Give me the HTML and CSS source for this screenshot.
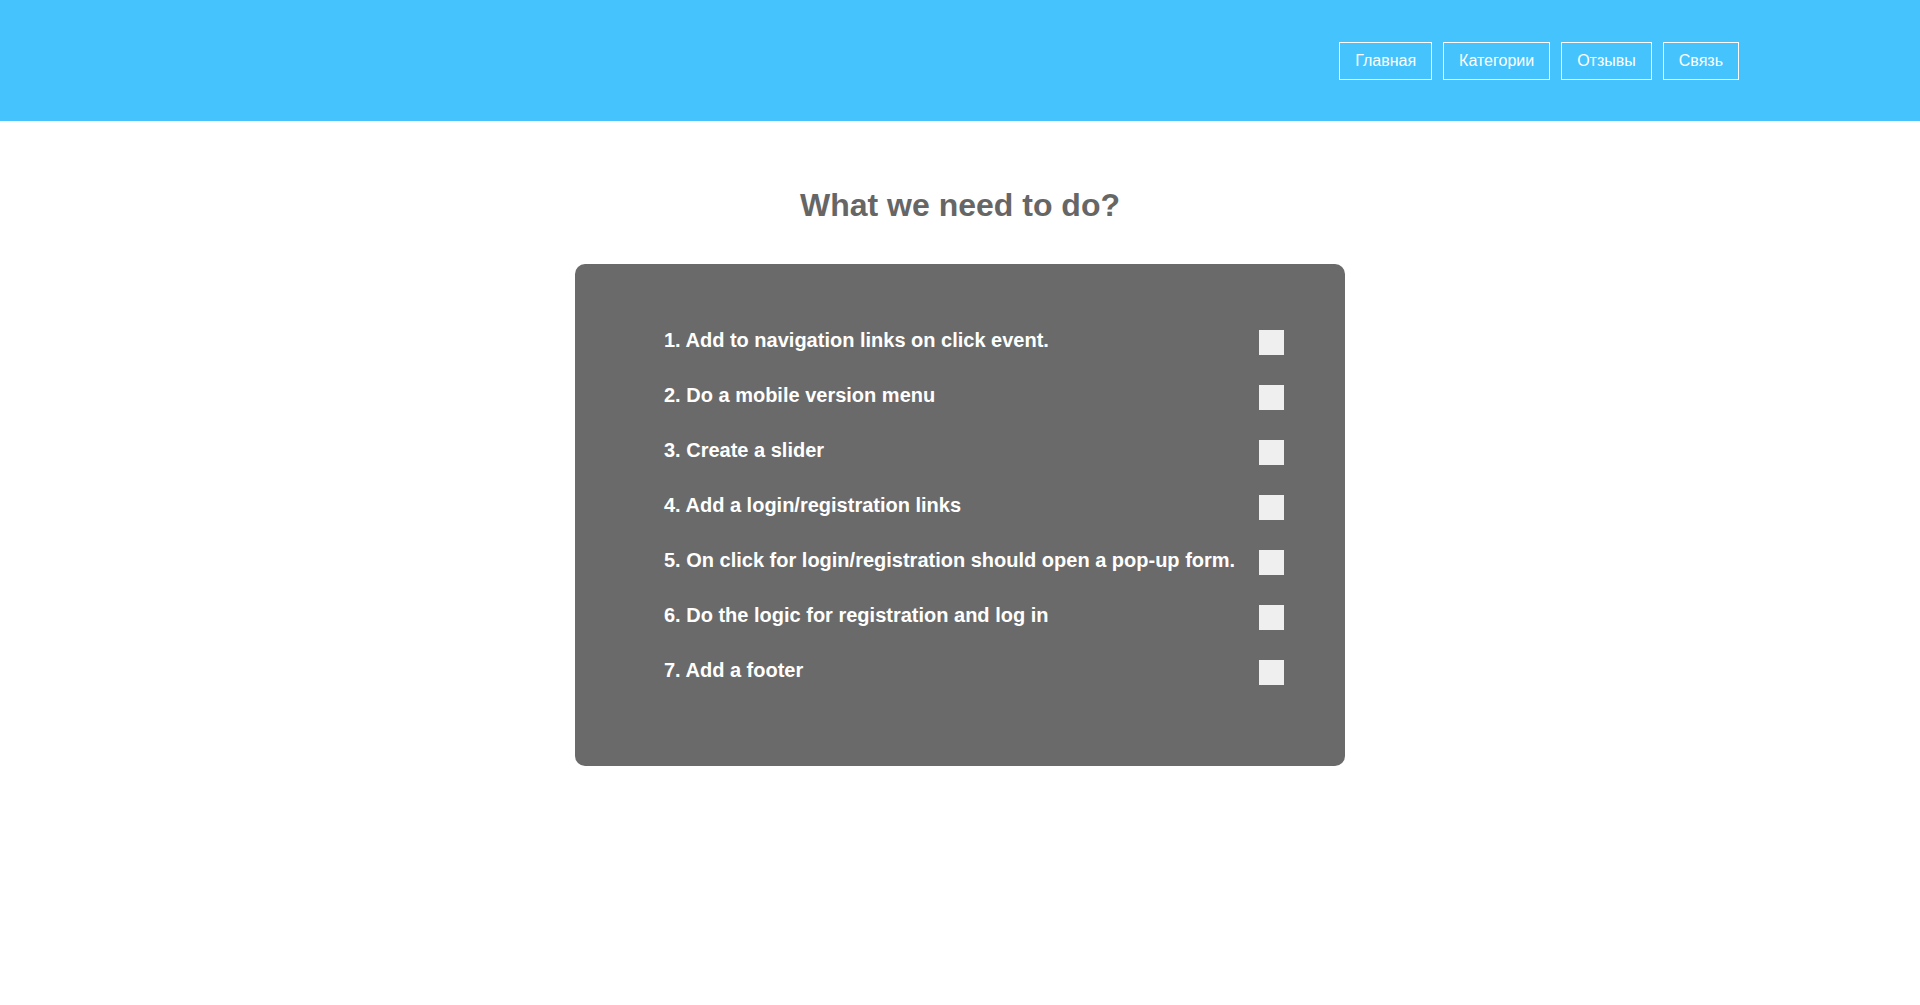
FILE: index.html
```html
<!DOCTYPE html>
<html lang="ru">
<head>
<meta charset="utf-8">
<title>Todo</title>
<link rel="stylesheet" href="styles.css">
</head>
<body>
<header class="header">
  <nav class="nav">
    <a class="nav-link" href="#">Главная</a>
    <a class="nav-link" href="#">Категории</a>
    <a class="nav-link" href="#">Отзывы</a>
    <a class="nav-link" href="#">Связь</a>
  </nav>
</header>
<main class="main">
  <h1 class="title">What we need to do?</h1>
  <section class="card">
    <ul class="todo-list">
      <li class="todo"><span class="todo-text">1. Add to navigation links on click event.</span><span class="check"></span></li>
      <li class="todo"><span class="todo-text">2. Do a mobile version menu</span><span class="check"></span></li>
      <li class="todo"><span class="todo-text">3. Create a slider</span><span class="check"></span></li>
      <li class="todo"><span class="todo-text">4. Add a login/registration links</span><span class="check"></span></li>
      <li class="todo"><span class="todo-text">5. On click for login/registration should open a pop-up form.</span><span class="check"></span></li>
      <li class="todo"><span class="todo-text">6. Do the logic for registration and log in</span><span class="check"></span></li>
      <li class="todo"><span class="todo-text">7. Add a footer</span><span class="check"></span></li>
    </ul>
  </section>
</main>
</body>
</html>
```
FILE: styles.css
```css
* { box-sizing: border-box; }
html, body { margin: 0; padding: 0; }
body {
  font-family: "Liberation Sans", Arial, sans-serif;
  background: #ffffff;
}
.header {
  height: 121px;
  background: #45c3fd;
  display: flex;
  align-items: center;
  justify-content: flex-end;
  padding-right: 181px;
}
.nav {
  display: flex;
  gap: 11px;
}
.nav-link {
  display: block;
  height: 38px;
  line-height: 36px;
  padding: 0 15px;
  border: 1px solid #ffffff;
  color: #ffffff;
  font-size: 16px;
  text-decoration: none;
}
.main {
  display: flex;
  flex-direction: column;
  align-items: center;
}
.title {
  margin: 66px 0 40px;
  font-size: 32px;
  line-height: 37px;
  font-weight: bold;
  color: #666666;
}
.card {
  width: 770px;
  height: 502px;
  background: #6a6a6a;
  border-radius: 10px;
  padding: 66px 61px 0 89px;
}
.todo-list {
  list-style: none;
  margin: 0;
  padding: 0;
  display: flex;
  flex-direction: column;
  gap: 30px;
}
.todo {
  display: flex;
  align-items: center;
  justify-content: space-between;
  height: 25px;
}
.todo-text {
  color: #ffffff;
  font-size: 20px;
  font-weight: bold;
  position: relative;
  top: -2px;
}
.check {
  width: 25px;
  height: 25px;
  background: #efefef;
}
```
